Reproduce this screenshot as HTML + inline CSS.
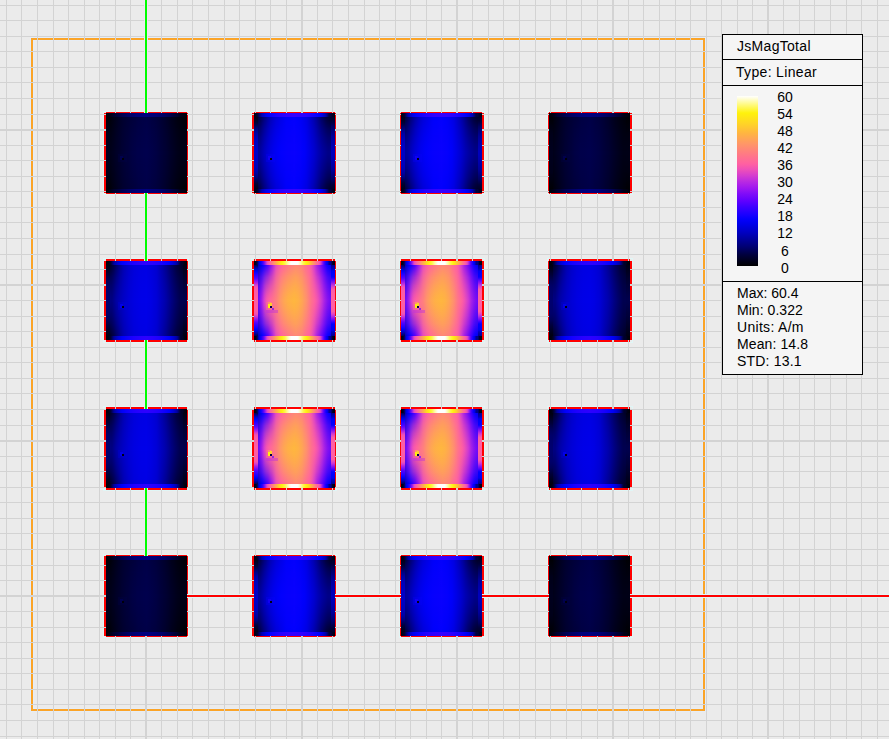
<!DOCTYPE html>
<html><head><meta charset="utf-8"><title>JsMagTotal</title>
<style>
html,body{margin:0;padding:0;background:#ebebeb;}
body{width:889px;height:739px;position:relative;overflow:hidden;font-family:"Liberation Sans",sans-serif;}
.t{position:absolute;font-size:14px;line-height:16px;color:#000;white-space:nowrap;}
.n{left:765px;width:40px;text-align:center;}
</style></head><body>
<svg width="889" height="739" viewBox="0 0 889 739" style="position:absolute;left:0;top:0"><defs><linearGradient id="fadeT" x1="0" x2="0" y1="0" y2="1"><stop offset="0" stop-color="#fff"/><stop offset="0.15" stop-color="#fff" stop-opacity="0.8"/><stop offset="0.35" stop-color="#fff" stop-opacity="0.52"/><stop offset="0.6" stop-color="#fff" stop-opacity="0.27"/><stop offset="0.85" stop-color="#fff" stop-opacity="0.08"/><stop offset="1" stop-color="#fff" stop-opacity="0"/></linearGradient><linearGradient id="fadeB" x1="0" x2="0" y1="1" y2="0"><stop offset="0" stop-color="#fff"/><stop offset="0.15" stop-color="#fff" stop-opacity="0.8"/><stop offset="0.35" stop-color="#fff" stop-opacity="0.52"/><stop offset="0.6" stop-color="#fff" stop-opacity="0.27"/><stop offset="0.85" stop-color="#fff" stop-opacity="0.08"/><stop offset="1" stop-color="#fff" stop-opacity="0"/></linearGradient><mask id="mT" maskContentUnits="objectBoundingBox"><rect x="0" y="0" width="1" height="1" fill="url(#fadeT)"/></mask><mask id="mB" maskContentUnits="objectBoundingBox"><rect x="0" y="0" width="1" height="1" fill="url(#fadeB)"/></mask><linearGradient id="g1" x1="0" x2="1" y1="0" y2="0"><stop offset="0.0000" stop-color="#000019"/><stop offset="0.0247" stop-color="#000019"/><stop offset="0.0494" stop-color="#000019"/><stop offset="0.0741" stop-color="#00001d"/><stop offset="0.0988" stop-color="#000021"/><stop offset="0.1235" stop-color="#000026"/><stop offset="0.1481" stop-color="#00002a"/><stop offset="0.1728" stop-color="#00002e"/><stop offset="0.1975" stop-color="#000033"/><stop offset="0.2222" stop-color="#000036"/><stop offset="0.2469" stop-color="#00003a"/><stop offset="0.2716" stop-color="#00003c"/><stop offset="0.2963" stop-color="#000040"/><stop offset="0.3210" stop-color="#000044"/><stop offset="0.3457" stop-color="#000046"/><stop offset="0.3704" stop-color="#000048"/><stop offset="0.3951" stop-color="#00004a"/><stop offset="0.4198" stop-color="#00004a"/><stop offset="0.4444" stop-color="#00004b"/><stop offset="0.4691" stop-color="#00004c"/><stop offset="0.4938" stop-color="#00004d"/><stop offset="0.5000" stop-color="#00004d"/><stop offset="0.5062" stop-color="#00004d"/><stop offset="0.5185" stop-color="#00004c"/><stop offset="0.5309" stop-color="#00004b"/><stop offset="0.5432" stop-color="#00004a"/><stop offset="0.5556" stop-color="#000049"/><stop offset="0.5679" stop-color="#000048"/><stop offset="0.5802" stop-color="#000047"/><stop offset="0.5926" stop-color="#000046"/><stop offset="0.6049" stop-color="#000045"/><stop offset="0.6173" stop-color="#000044"/><stop offset="0.6296" stop-color="#000042"/><stop offset="0.6420" stop-color="#000040"/><stop offset="0.6543" stop-color="#00003e"/><stop offset="0.6667" stop-color="#00003c"/><stop offset="0.6790" stop-color="#00003a"/><stop offset="0.6914" stop-color="#000039"/><stop offset="0.7037" stop-color="#000037"/><stop offset="0.7160" stop-color="#000035"/><stop offset="0.7284" stop-color="#000034"/><stop offset="0.7407" stop-color="#000032"/><stop offset="0.7531" stop-color="#000030"/><stop offset="0.7654" stop-color="#00002e"/><stop offset="0.7778" stop-color="#00002b"/><stop offset="0.7901" stop-color="#000029"/><stop offset="0.8025" stop-color="#000027"/><stop offset="0.8148" stop-color="#000025"/><stop offset="0.8272" stop-color="#000023"/><stop offset="0.8395" stop-color="#000021"/><stop offset="0.8519" stop-color="#00001f"/><stop offset="0.8642" stop-color="#00001d"/><stop offset="0.8765" stop-color="#00001b"/><stop offset="0.8889" stop-color="#000019"/><stop offset="0.9012" stop-color="#000018"/><stop offset="0.9136" stop-color="#000016"/><stop offset="0.9259" stop-color="#000016"/><stop offset="0.9383" stop-color="#000016"/><stop offset="0.9506" stop-color="#000016"/><stop offset="0.9630" stop-color="#000016"/><stop offset="0.9753" stop-color="#000016"/><stop offset="0.9877" stop-color="#000016"/><stop offset="1.0000" stop-color="#000016"/></linearGradient><linearGradient id="g2" x1="0" x2="1" y1="0" y2="0"><stop offset="0.0000" stop-color="#000005"/><stop offset="0.0247" stop-color="#000008"/><stop offset="0.0494" stop-color="#00000a"/><stop offset="0.0741" stop-color="#000010"/><stop offset="0.0988" stop-color="#000016"/><stop offset="0.1235" stop-color="#00001c"/><stop offset="0.1481" stop-color="#000022"/><stop offset="0.1728" stop-color="#000027"/><stop offset="0.1975" stop-color="#00002c"/><stop offset="0.2222" stop-color="#000030"/><stop offset="0.2469" stop-color="#000033"/><stop offset="0.2716" stop-color="#000035"/><stop offset="0.2963" stop-color="#000038"/><stop offset="0.3210" stop-color="#00003a"/><stop offset="0.3457" stop-color="#00003c"/><stop offset="0.3704" stop-color="#00003f"/><stop offset="0.3951" stop-color="#000042"/><stop offset="0.4198" stop-color="#000043"/><stop offset="0.4444" stop-color="#000045"/><stop offset="0.4691" stop-color="#000046"/><stop offset="0.4938" stop-color="#000047"/><stop offset="0.5000" stop-color="#000048"/><stop offset="0.5062" stop-color="#000047"/><stop offset="0.5185" stop-color="#000046"/><stop offset="0.5309" stop-color="#000045"/><stop offset="0.5432" stop-color="#000044"/><stop offset="0.5556" stop-color="#000042"/><stop offset="0.5679" stop-color="#000041"/><stop offset="0.5802" stop-color="#000040"/><stop offset="0.5926" stop-color="#00003f"/><stop offset="0.6049" stop-color="#00003e"/><stop offset="0.6173" stop-color="#00003d"/><stop offset="0.6296" stop-color="#00003b"/><stop offset="0.6420" stop-color="#000039"/><stop offset="0.6543" stop-color="#000038"/><stop offset="0.6667" stop-color="#000036"/><stop offset="0.6790" stop-color="#000034"/><stop offset="0.6914" stop-color="#000032"/><stop offset="0.7037" stop-color="#000030"/><stop offset="0.7160" stop-color="#00002e"/><stop offset="0.7284" stop-color="#00002c"/><stop offset="0.7407" stop-color="#00002a"/><stop offset="0.7531" stop-color="#000027"/><stop offset="0.7654" stop-color="#000025"/><stop offset="0.7778" stop-color="#000022"/><stop offset="0.7901" stop-color="#000020"/><stop offset="0.8025" stop-color="#00001d"/><stop offset="0.8148" stop-color="#00001b"/><stop offset="0.8272" stop-color="#000019"/><stop offset="0.8395" stop-color="#000017"/><stop offset="0.8519" stop-color="#000015"/><stop offset="0.8642" stop-color="#000013"/><stop offset="0.8765" stop-color="#000011"/><stop offset="0.8889" stop-color="#00000f"/><stop offset="0.9012" stop-color="#00000e"/><stop offset="0.9136" stop-color="#00000c"/><stop offset="0.9259" stop-color="#00000b"/><stop offset="0.9383" stop-color="#00000a"/><stop offset="0.9506" stop-color="#000009"/><stop offset="0.9630" stop-color="#000008"/><stop offset="0.9753" stop-color="#000007"/><stop offset="0.9877" stop-color="#000006"/><stop offset="1.0000" stop-color="#000005"/></linearGradient><linearGradient id="g3" x1="0" x2="1" y1="0" y2="0"><stop offset="0.0000" stop-color="#000003"/><stop offset="0.0247" stop-color="#00000c"/><stop offset="0.0494" stop-color="#000014"/><stop offset="0.0741" stop-color="#000020"/><stop offset="0.0988" stop-color="#00002d"/><stop offset="0.1235" stop-color="#000034"/><stop offset="0.1481" stop-color="#00003c"/><stop offset="0.1728" stop-color="#000046"/><stop offset="0.1975" stop-color="#00004f"/><stop offset="0.2222" stop-color="#000056"/><stop offset="0.2469" stop-color="#00005c"/><stop offset="0.2716" stop-color="#000063"/><stop offset="0.2963" stop-color="#000068"/><stop offset="0.3210" stop-color="#00006c"/><stop offset="0.3457" stop-color="#000071"/><stop offset="0.3704" stop-color="#000076"/><stop offset="0.3951" stop-color="#000078"/><stop offset="0.4198" stop-color="#00007a"/><stop offset="0.4444" stop-color="#00007c"/><stop offset="0.4691" stop-color="#00007d"/><stop offset="0.4938" stop-color="#00007f"/><stop offset="0.5000" stop-color="#000080"/><stop offset="0.5062" stop-color="#00007f"/><stop offset="0.5185" stop-color="#00007e"/><stop offset="0.5309" stop-color="#00007d"/><stop offset="0.5432" stop-color="#00007c"/><stop offset="0.5556" stop-color="#00007b"/><stop offset="0.5679" stop-color="#00007a"/><stop offset="0.5802" stop-color="#000079"/><stop offset="0.5926" stop-color="#000078"/><stop offset="0.6049" stop-color="#000077"/><stop offset="0.6173" stop-color="#000076"/><stop offset="0.6296" stop-color="#000075"/><stop offset="0.6420" stop-color="#000072"/><stop offset="0.6543" stop-color="#00006f"/><stop offset="0.6667" stop-color="#00006d"/><stop offset="0.6790" stop-color="#00006a"/><stop offset="0.6914" stop-color="#000068"/><stop offset="0.7037" stop-color="#000065"/><stop offset="0.7160" stop-color="#000063"/><stop offset="0.7284" stop-color="#00005f"/><stop offset="0.7407" stop-color="#00005c"/><stop offset="0.7531" stop-color="#000058"/><stop offset="0.7654" stop-color="#000055"/><stop offset="0.7778" stop-color="#000052"/><stop offset="0.7901" stop-color="#00004e"/><stop offset="0.8025" stop-color="#000048"/><stop offset="0.8148" stop-color="#000043"/><stop offset="0.8272" stop-color="#00003e"/><stop offset="0.8395" stop-color="#00003a"/><stop offset="0.8519" stop-color="#000036"/><stop offset="0.8642" stop-color="#000032"/><stop offset="0.8765" stop-color="#00002e"/><stop offset="0.8889" stop-color="#000028"/><stop offset="0.9012" stop-color="#000021"/><stop offset="0.9136" stop-color="#00001b"/><stop offset="0.9259" stop-color="#000014"/><stop offset="0.9383" stop-color="#000014"/><stop offset="0.9506" stop-color="#000014"/><stop offset="0.9630" stop-color="#000010"/><stop offset="0.9753" stop-color="#00000c"/><stop offset="0.9877" stop-color="#000007"/><stop offset="1.0000" stop-color="#000003"/></linearGradient><linearGradient id="g4" x1="0" x2="0" y1="0" y2="1"><stop offset="0.0000" stop-color="#000005"/><stop offset="0.0282" stop-color="#000008"/><stop offset="0.0563" stop-color="#00000a"/><stop offset="0.0845" stop-color="#00000c"/><stop offset="0.1127" stop-color="#00000f"/><stop offset="0.1408" stop-color="#000012"/><stop offset="0.1690" stop-color="#000014"/><stop offset="0.1972" stop-color="#000016"/><stop offset="0.2254" stop-color="#000019"/><stop offset="0.2535" stop-color="#00001a"/><stop offset="0.2817" stop-color="#00001a"/><stop offset="0.3099" stop-color="#00001a"/><stop offset="0.3380" stop-color="#00001b"/><stop offset="0.3662" stop-color="#00001c"/><stop offset="0.3944" stop-color="#00001c"/><stop offset="0.4225" stop-color="#00001d"/><stop offset="0.4507" stop-color="#00001d"/><stop offset="0.4789" stop-color="#00001e"/><stop offset="0.5211" stop-color="#00001e"/><stop offset="0.5493" stop-color="#00001d"/><stop offset="0.5775" stop-color="#00001d"/><stop offset="0.6056" stop-color="#00001c"/><stop offset="0.6338" stop-color="#00001c"/><stop offset="0.6620" stop-color="#00001b"/><stop offset="0.6901" stop-color="#00001a"/><stop offset="0.7183" stop-color="#00001a"/><stop offset="0.7465" stop-color="#00001a"/><stop offset="0.7746" stop-color="#000019"/><stop offset="0.8028" stop-color="#000016"/><stop offset="0.8310" stop-color="#000014"/><stop offset="0.8592" stop-color="#000012"/><stop offset="0.8873" stop-color="#00000f"/><stop offset="0.9155" stop-color="#00000c"/><stop offset="0.9437" stop-color="#00000a"/><stop offset="0.9718" stop-color="#000008"/><stop offset="1.0000" stop-color="#000005"/></linearGradient><linearGradient id="g5" x1="0" x2="0" y1="0" y2="1"><stop offset="0.0000" stop-color="#000005"/><stop offset="0.0282" stop-color="#000006"/><stop offset="0.0563" stop-color="#000008"/><stop offset="0.0845" stop-color="#000009"/><stop offset="0.1127" stop-color="#00000b"/><stop offset="0.1408" stop-color="#00000c"/><stop offset="0.1690" stop-color="#00000d"/><stop offset="0.1972" stop-color="#00000e"/><stop offset="0.2254" stop-color="#000010"/><stop offset="0.2535" stop-color="#000011"/><stop offset="0.2817" stop-color="#000012"/><stop offset="0.3099" stop-color="#000012"/><stop offset="0.3380" stop-color="#000013"/><stop offset="0.3662" stop-color="#000014"/><stop offset="0.3944" stop-color="#000014"/><stop offset="0.4225" stop-color="#000015"/><stop offset="0.4507" stop-color="#000015"/><stop offset="0.4789" stop-color="#000016"/><stop offset="0.5211" stop-color="#000016"/><stop offset="0.5493" stop-color="#000015"/><stop offset="0.5775" stop-color="#000015"/><stop offset="0.6056" stop-color="#000014"/><stop offset="0.6338" stop-color="#000014"/><stop offset="0.6620" stop-color="#000013"/><stop offset="0.6901" stop-color="#000012"/><stop offset="0.7183" stop-color="#000012"/><stop offset="0.7465" stop-color="#000011"/><stop offset="0.7746" stop-color="#000010"/><stop offset="0.8028" stop-color="#00000e"/><stop offset="0.8310" stop-color="#00000d"/><stop offset="0.8592" stop-color="#00000c"/><stop offset="0.8873" stop-color="#00000b"/><stop offset="0.9155" stop-color="#000009"/><stop offset="0.9437" stop-color="#000008"/><stop offset="0.9718" stop-color="#000006"/><stop offset="1.0000" stop-color="#000005"/></linearGradient><linearGradient id="g6" x1="0" x2="1" y1="0" y2="0"><stop offset="0.0000" stop-color="#00009d"/><stop offset="0.0247" stop-color="#00009d"/><stop offset="0.0494" stop-color="#00009d"/><stop offset="0.0741" stop-color="#00009d"/><stop offset="0.0988" stop-color="#0000ac"/><stop offset="0.1235" stop-color="#0000bc"/><stop offset="0.1481" stop-color="#0000ca"/><stop offset="0.1728" stop-color="#0000d6"/><stop offset="0.1975" stop-color="#0000df"/><stop offset="0.2099" stop-color="#0000e4"/><stop offset="0.2222" stop-color="#0000e8"/><stop offset="0.2469" stop-color="#0000ef"/><stop offset="0.2716" stop-color="#0000f4"/><stop offset="0.2963" stop-color="#0000f9"/><stop offset="0.3210" stop-color="#0100fc"/><stop offset="0.3457" stop-color="#0300fd"/><stop offset="0.3704" stop-color="#0400fd"/><stop offset="0.3951" stop-color="#0600fd"/><stop offset="0.4074" stop-color="#0600fd"/><stop offset="0.4198" stop-color="#0700fd"/><stop offset="0.4444" stop-color="#0700fd"/><stop offset="0.4691" stop-color="#0800fd"/><stop offset="0.4938" stop-color="#0800fe"/><stop offset="0.5000" stop-color="#0900fe"/><stop offset="0.5062" stop-color="#0800fe"/><stop offset="0.5185" stop-color="#0800fd"/><stop offset="0.5309" stop-color="#0700fd"/><stop offset="0.5432" stop-color="#0600fd"/><stop offset="0.5556" stop-color="#0600fd"/><stop offset="0.5679" stop-color="#0500fd"/><stop offset="0.5802" stop-color="#0400fd"/><stop offset="0.5926" stop-color="#0200fc"/><stop offset="0.6049" stop-color="#0100fc"/><stop offset="0.6173" stop-color="#0000fb"/><stop offset="0.6296" stop-color="#0000f9"/><stop offset="0.6420" stop-color="#0000f5"/><stop offset="0.6543" stop-color="#0000f0"/><stop offset="0.6667" stop-color="#0000ec"/><stop offset="0.6790" stop-color="#0000e8"/><stop offset="0.6914" stop-color="#0000e3"/><stop offset="0.7037" stop-color="#0000de"/><stop offset="0.7160" stop-color="#0000d9"/><stop offset="0.7284" stop-color="#0000d5"/><stop offset="0.7407" stop-color="#0000d0"/><stop offset="0.7531" stop-color="#0000ca"/><stop offset="0.7654" stop-color="#0000c3"/><stop offset="0.7778" stop-color="#0000bd"/><stop offset="0.7901" stop-color="#0000b6"/><stop offset="0.8025" stop-color="#0000b0"/><stop offset="0.8148" stop-color="#0000ab"/><stop offset="0.8272" stop-color="#0000a5"/><stop offset="0.8395" stop-color="#0000a0"/><stop offset="0.8519" stop-color="#00009b"/><stop offset="0.8642" stop-color="#000097"/><stop offset="0.8765" stop-color="#000093"/><stop offset="0.8889" stop-color="#00008f"/><stop offset="0.9012" stop-color="#00008b"/><stop offset="0.9136" stop-color="#000087"/><stop offset="0.9259" stop-color="#000087"/><stop offset="0.9383" stop-color="#000087"/><stop offset="0.9506" stop-color="#000087"/><stop offset="0.9630" stop-color="#000087"/><stop offset="0.9753" stop-color="#000087"/><stop offset="0.9877" stop-color="#000087"/><stop offset="1.0000" stop-color="#000087"/></linearGradient><linearGradient id="g7" x1="0" x2="1" y1="0" y2="0"><stop offset="0.0000" stop-color="#00001e"/><stop offset="0.0247" stop-color="#000020"/><stop offset="0.0494" stop-color="#000031"/><stop offset="0.0741" stop-color="#000048"/><stop offset="0.0988" stop-color="#000060"/><stop offset="0.1235" stop-color="#000078"/><stop offset="0.1481" stop-color="#00008c"/><stop offset="0.1728" stop-color="#0000a1"/><stop offset="0.1975" stop-color="#0000b2"/><stop offset="0.2222" stop-color="#0000c0"/><stop offset="0.2469" stop-color="#0000cc"/><stop offset="0.2716" stop-color="#0000d8"/><stop offset="0.2963" stop-color="#0000de"/><stop offset="0.3210" stop-color="#0000e5"/><stop offset="0.3333" stop-color="#0000e8"/><stop offset="0.3457" stop-color="#0000eb"/><stop offset="0.3704" stop-color="#0000f2"/><stop offset="0.3951" stop-color="#0000f9"/><stop offset="0.4198" stop-color="#0000fb"/><stop offset="0.4444" stop-color="#0000fc"/><stop offset="0.4691" stop-color="#0200fc"/><stop offset="0.4938" stop-color="#0300fd"/><stop offset="0.5000" stop-color="#0300fd"/><stop offset="0.5062" stop-color="#0300fc"/><stop offset="0.5185" stop-color="#0100fc"/><stop offset="0.5309" stop-color="#0000fc"/><stop offset="0.5432" stop-color="#0000fb"/><stop offset="0.5556" stop-color="#0000f9"/><stop offset="0.5679" stop-color="#0000f7"/><stop offset="0.5802" stop-color="#0000f6"/><stop offset="0.5926" stop-color="#0000f2"/><stop offset="0.6049" stop-color="#0000ef"/><stop offset="0.6173" stop-color="#0000eb"/><stop offset="0.6296" stop-color="#0000e8"/><stop offset="0.6420" stop-color="#0000e4"/><stop offset="0.6543" stop-color="#0000e1"/><stop offset="0.6667" stop-color="#0000d9"/><stop offset="0.6790" stop-color="#0000d2"/><stop offset="0.6914" stop-color="#0000cb"/><stop offset="0.7037" stop-color="#0000c4"/><stop offset="0.7160" stop-color="#0000bd"/><stop offset="0.7284" stop-color="#0000b6"/><stop offset="0.7407" stop-color="#0000ae"/><stop offset="0.7531" stop-color="#0000a5"/><stop offset="0.7654" stop-color="#00009c"/><stop offset="0.7778" stop-color="#000092"/><stop offset="0.7901" stop-color="#000087"/><stop offset="0.8025" stop-color="#00007d"/><stop offset="0.8148" stop-color="#000073"/><stop offset="0.8272" stop-color="#000068"/><stop offset="0.8395" stop-color="#000060"/><stop offset="0.8519" stop-color="#000058"/><stop offset="0.8642" stop-color="#00004f"/><stop offset="0.8765" stop-color="#000047"/><stop offset="0.8889" stop-color="#00003e"/><stop offset="0.9012" stop-color="#000038"/><stop offset="0.9136" stop-color="#000034"/><stop offset="0.9259" stop-color="#00002f"/><stop offset="0.9383" stop-color="#00002a"/><stop offset="0.9506" stop-color="#000027"/><stop offset="0.9630" stop-color="#000025"/><stop offset="0.9753" stop-color="#000024"/><stop offset="0.9877" stop-color="#000022"/><stop offset="1.0000" stop-color="#000020"/></linearGradient><linearGradient id="g8" x1="0" x2="1" y1="0" y2="0"><stop offset="0.0000" stop-color="#00000f"/><stop offset="0.0247" stop-color="#000020"/><stop offset="0.0370" stop-color="#000028"/><stop offset="0.0494" stop-color="#00003c"/><stop offset="0.0617" stop-color="#000063"/><stop offset="0.0741" stop-color="#000080"/><stop offset="0.0988" stop-color="#0000b7"/><stop offset="0.1235" stop-color="#0000d1"/><stop offset="0.1481" stop-color="#0000ec"/><stop offset="0.1728" stop-color="#0000f9"/><stop offset="0.1975" stop-color="#0600fd"/><stop offset="0.2222" stop-color="#0d00fe"/><stop offset="0.2469" stop-color="#1300ff"/><stop offset="0.2716" stop-color="#1900ff"/><stop offset="0.2963" stop-color="#1f00ff"/><stop offset="0.3210" stop-color="#2400ff"/><stop offset="0.3457" stop-color="#2800ff"/><stop offset="0.3704" stop-color="#2b00ff"/><stop offset="0.3951" stop-color="#2e00ff"/><stop offset="0.4198" stop-color="#3100ff"/><stop offset="0.4444" stop-color="#3200ff"/><stop offset="0.4691" stop-color="#3300ff"/><stop offset="0.4938" stop-color="#3400ff"/><stop offset="0.5000" stop-color="#3400ff"/><stop offset="0.5062" stop-color="#3400ff"/><stop offset="0.5185" stop-color="#3300ff"/><stop offset="0.5309" stop-color="#3300ff"/><stop offset="0.5432" stop-color="#3200ff"/><stop offset="0.5556" stop-color="#3200ff"/><stop offset="0.5679" stop-color="#3100ff"/><stop offset="0.5802" stop-color="#3000ff"/><stop offset="0.5926" stop-color="#2f00ff"/><stop offset="0.6049" stop-color="#2d00ff"/><stop offset="0.6173" stop-color="#2c00ff"/><stop offset="0.6296" stop-color="#2a00ff"/><stop offset="0.6420" stop-color="#2900ff"/><stop offset="0.6543" stop-color="#2700ff"/><stop offset="0.6667" stop-color="#2400ff"/><stop offset="0.6790" stop-color="#2200ff"/><stop offset="0.6914" stop-color="#1f00ff"/><stop offset="0.7037" stop-color="#1c00ff"/><stop offset="0.7160" stop-color="#1900ff"/><stop offset="0.7284" stop-color="#1600ff"/><stop offset="0.7407" stop-color="#1300ff"/><stop offset="0.7531" stop-color="#0f00ff"/><stop offset="0.7654" stop-color="#0c00fe"/><stop offset="0.7778" stop-color="#0900fe"/><stop offset="0.7901" stop-color="#0500fd"/><stop offset="0.8025" stop-color="#0000fc"/><stop offset="0.8148" stop-color="#0000f6"/><stop offset="0.8272" stop-color="#0000ef"/><stop offset="0.8395" stop-color="#0000e4"/><stop offset="0.8519" stop-color="#0000d5"/><stop offset="0.8642" stop-color="#0000c8"/><stop offset="0.8765" stop-color="#0000ba"/><stop offset="0.8889" stop-color="#0000a2"/><stop offset="0.9012" stop-color="#000083"/><stop offset="0.9136" stop-color="#000064"/><stop offset="0.9259" stop-color="#00003c"/><stop offset="0.9383" stop-color="#00003c"/><stop offset="0.9506" stop-color="#00003c"/><stop offset="0.9630" stop-color="#000028"/><stop offset="0.9753" stop-color="#000020"/><stop offset="0.9877" stop-color="#000017"/><stop offset="1.0000" stop-color="#00000f"/></linearGradient><linearGradient id="g9" x1="0" x2="0" y1="0" y2="1"><stop offset="0.0000" stop-color="#000019"/><stop offset="0.0282" stop-color="#000023"/><stop offset="0.0563" stop-color="#00002d"/><stop offset="0.0845" stop-color="#00003a"/><stop offset="0.1127" stop-color="#00004f"/><stop offset="0.1408" stop-color="#000068"/><stop offset="0.1690" stop-color="#000080"/><stop offset="0.1972" stop-color="#000090"/><stop offset="0.2254" stop-color="#0000a1"/><stop offset="0.2535" stop-color="#0000aa"/><stop offset="0.2817" stop-color="#0000b2"/><stop offset="0.3099" stop-color="#0000b9"/><stop offset="0.3380" stop-color="#0000bb"/><stop offset="0.3662" stop-color="#0000be"/><stop offset="0.3944" stop-color="#0000c0"/><stop offset="0.4225" stop-color="#0000c3"/><stop offset="0.4507" stop-color="#0000c4"/><stop offset="0.4789" stop-color="#0000c5"/><stop offset="0.5211" stop-color="#0000c5"/><stop offset="0.5493" stop-color="#0000c4"/><stop offset="0.5775" stop-color="#0000c3"/><stop offset="0.6056" stop-color="#0000c0"/><stop offset="0.6338" stop-color="#0000be"/><stop offset="0.6620" stop-color="#0000bb"/><stop offset="0.6901" stop-color="#0000b9"/><stop offset="0.7183" stop-color="#0000b2"/><stop offset="0.7465" stop-color="#0000aa"/><stop offset="0.7746" stop-color="#0000a1"/><stop offset="0.8028" stop-color="#000090"/><stop offset="0.8310" stop-color="#000080"/><stop offset="0.8592" stop-color="#000068"/><stop offset="0.8873" stop-color="#00004f"/><stop offset="0.9155" stop-color="#00003a"/><stop offset="0.9437" stop-color="#00002d"/><stop offset="0.9718" stop-color="#000023"/><stop offset="1.0000" stop-color="#000019"/></linearGradient><linearGradient id="g10" x1="0" x2="0" y1="0" y2="1"><stop offset="0.0000" stop-color="#000028"/><stop offset="0.0282" stop-color="#000031"/><stop offset="0.0563" stop-color="#000039"/><stop offset="0.0845" stop-color="#000048"/><stop offset="0.1127" stop-color="#000058"/><stop offset="0.1268" stop-color="#000061"/><stop offset="0.1408" stop-color="#000066"/><stop offset="0.1690" stop-color="#000072"/><stop offset="0.1972" stop-color="#00007d"/><stop offset="0.2254" stop-color="#000088"/><stop offset="0.2535" stop-color="#000093"/><stop offset="0.2676" stop-color="#000099"/><stop offset="0.2817" stop-color="#00009b"/><stop offset="0.3099" stop-color="#0000a1"/><stop offset="0.3380" stop-color="#0000a6"/><stop offset="0.3662" stop-color="#0000ab"/><stop offset="0.3944" stop-color="#0000b0"/><stop offset="0.4225" stop-color="#0000b4"/><stop offset="0.4507" stop-color="#0000b8"/><stop offset="0.4789" stop-color="#0000bc"/><stop offset="0.5211" stop-color="#0000bc"/><stop offset="0.5493" stop-color="#0000b8"/><stop offset="0.5775" stop-color="#0000b4"/><stop offset="0.6056" stop-color="#0000b0"/><stop offset="0.6338" stop-color="#0000ab"/><stop offset="0.6620" stop-color="#0000a6"/><stop offset="0.6901" stop-color="#0000a1"/><stop offset="0.7183" stop-color="#00009b"/><stop offset="0.7324" stop-color="#000099"/><stop offset="0.7465" stop-color="#000093"/><stop offset="0.7746" stop-color="#000088"/><stop offset="0.8028" stop-color="#00007d"/><stop offset="0.8310" stop-color="#000072"/><stop offset="0.8592" stop-color="#000066"/><stop offset="0.8732" stop-color="#000061"/><stop offset="0.8873" stop-color="#000058"/><stop offset="0.9155" stop-color="#000048"/><stop offset="0.9437" stop-color="#000039"/><stop offset="0.9718" stop-color="#000031"/><stop offset="1.0000" stop-color="#000028"/></linearGradient><linearGradient id="g11" x1="0" x2="1" y1="0" y2="0"><stop offset="0.0000" stop-color="#000080"/><stop offset="0.0247" stop-color="#000080"/><stop offset="0.0494" stop-color="#000080"/><stop offset="0.0741" stop-color="#000080"/><stop offset="0.0988" stop-color="#000090"/><stop offset="0.1235" stop-color="#0000a1"/><stop offset="0.1481" stop-color="#0000ad"/><stop offset="0.1728" stop-color="#0000b7"/><stop offset="0.1975" stop-color="#0000bf"/><stop offset="0.2222" stop-color="#0000c7"/><stop offset="0.2469" stop-color="#0000ce"/><stop offset="0.2716" stop-color="#0000d4"/><stop offset="0.2840" stop-color="#0000d8"/><stop offset="0.2963" stop-color="#0000d9"/><stop offset="0.3210" stop-color="#0000dd"/><stop offset="0.3457" stop-color="#0000e1"/><stop offset="0.3704" stop-color="#0000e3"/><stop offset="0.3951" stop-color="#0000e5"/><stop offset="0.4198" stop-color="#0000e7"/><stop offset="0.4444" stop-color="#0000e8"/><stop offset="0.4691" stop-color="#0000e8"/><stop offset="0.4938" stop-color="#0000e9"/><stop offset="0.5000" stop-color="#0000e9"/><stop offset="0.5062" stop-color="#0000e8"/><stop offset="0.5185" stop-color="#0000e7"/><stop offset="0.5309" stop-color="#0000e6"/><stop offset="0.5432" stop-color="#0000e5"/><stop offset="0.5556" stop-color="#0000e4"/><stop offset="0.5679" stop-color="#0000e2"/><stop offset="0.5802" stop-color="#0000df"/><stop offset="0.5926" stop-color="#0000dd"/><stop offset="0.6049" stop-color="#0000db"/><stop offset="0.6173" stop-color="#0000d9"/><stop offset="0.6296" stop-color="#0000d5"/><stop offset="0.6420" stop-color="#0000d0"/><stop offset="0.6543" stop-color="#0000cb"/><stop offset="0.6667" stop-color="#0000c6"/><stop offset="0.6790" stop-color="#0000c1"/><stop offset="0.6914" stop-color="#0000bc"/><stop offset="0.7037" stop-color="#0000b8"/><stop offset="0.7160" stop-color="#0000b3"/><stop offset="0.7284" stop-color="#0000ae"/><stop offset="0.7407" stop-color="#0000a8"/><stop offset="0.7531" stop-color="#0000a1"/><stop offset="0.7654" stop-color="#00009a"/><stop offset="0.7778" stop-color="#000093"/><stop offset="0.7901" stop-color="#00008c"/><stop offset="0.8025" stop-color="#000085"/><stop offset="0.8148" stop-color="#00007e"/><stop offset="0.8272" stop-color="#000078"/><stop offset="0.8395" stop-color="#000071"/><stop offset="0.8519" stop-color="#00006b"/><stop offset="0.8642" stop-color="#000065"/><stop offset="0.8765" stop-color="#000060"/><stop offset="0.8889" stop-color="#00005a"/><stop offset="0.9012" stop-color="#000055"/><stop offset="0.9136" stop-color="#00004f"/><stop offset="0.9259" stop-color="#00004f"/><stop offset="0.9383" stop-color="#00004f"/><stop offset="0.9506" stop-color="#00004f"/><stop offset="0.9630" stop-color="#00004f"/><stop offset="0.9753" stop-color="#00004f"/><stop offset="0.9877" stop-color="#00004f"/><stop offset="1.0000" stop-color="#00004f"/></linearGradient><linearGradient id="g12" x1="0" x2="1" y1="0" y2="0"><stop offset="0.0000" stop-color="#000014"/><stop offset="0.0247" stop-color="#00001c"/><stop offset="0.0494" stop-color="#000023"/><stop offset="0.0741" stop-color="#000037"/><stop offset="0.0988" stop-color="#00004a"/><stop offset="0.1235" stop-color="#000063"/><stop offset="0.1481" stop-color="#000079"/><stop offset="0.1728" stop-color="#00008f"/><stop offset="0.1975" stop-color="#0000a2"/><stop offset="0.2222" stop-color="#0000b3"/><stop offset="0.2469" stop-color="#0000bc"/><stop offset="0.2716" stop-color="#0000c6"/><stop offset="0.2840" stop-color="#0000ca"/><stop offset="0.2963" stop-color="#0000cd"/><stop offset="0.3210" stop-color="#0000d3"/><stop offset="0.3457" stop-color="#0000d9"/><stop offset="0.3704" stop-color="#0000dc"/><stop offset="0.3951" stop-color="#0000de"/><stop offset="0.4198" stop-color="#0000e1"/><stop offset="0.4444" stop-color="#0000e2"/><stop offset="0.4691" stop-color="#0000e3"/><stop offset="0.4938" stop-color="#0000e4"/><stop offset="0.5000" stop-color="#0000e4"/><stop offset="0.5062" stop-color="#0000e2"/><stop offset="0.5185" stop-color="#0000e0"/><stop offset="0.5309" stop-color="#0000df"/><stop offset="0.5432" stop-color="#0000dd"/><stop offset="0.5556" stop-color="#0000dc"/><stop offset="0.5679" stop-color="#0000da"/><stop offset="0.5802" stop-color="#0000d8"/><stop offset="0.5926" stop-color="#0000d6"/><stop offset="0.6049" stop-color="#0000d3"/><stop offset="0.6173" stop-color="#0000d1"/><stop offset="0.6296" stop-color="#0000cd"/><stop offset="0.6420" stop-color="#0000c6"/><stop offset="0.6543" stop-color="#0000bf"/><stop offset="0.6667" stop-color="#0000b8"/><stop offset="0.6790" stop-color="#0000b1"/><stop offset="0.6914" stop-color="#0000ab"/><stop offset="0.7037" stop-color="#0000a4"/><stop offset="0.7160" stop-color="#00009d"/><stop offset="0.7284" stop-color="#000096"/><stop offset="0.7407" stop-color="#00008f"/><stop offset="0.7531" stop-color="#000087"/><stop offset="0.7654" stop-color="#00007e"/><stop offset="0.7778" stop-color="#000076"/><stop offset="0.7901" stop-color="#00006e"/><stop offset="0.8025" stop-color="#000066"/><stop offset="0.8148" stop-color="#00005f"/><stop offset="0.8272" stop-color="#000058"/><stop offset="0.8395" stop-color="#000051"/><stop offset="0.8519" stop-color="#00004a"/><stop offset="0.8642" stop-color="#000043"/><stop offset="0.8765" stop-color="#00003c"/><stop offset="0.8889" stop-color="#000038"/><stop offset="0.9012" stop-color="#000034"/><stop offset="0.9136" stop-color="#000030"/><stop offset="0.9259" stop-color="#00002c"/><stop offset="0.9383" stop-color="#000027"/><stop offset="0.9506" stop-color="#000022"/><stop offset="0.9630" stop-color="#00001d"/><stop offset="0.9753" stop-color="#000018"/><stop offset="0.9877" stop-color="#000016"/><stop offset="1.0000" stop-color="#000014"/></linearGradient><linearGradient id="g13" x1="0" x2="1" y1="0" y2="0"><stop offset="0.0000" stop-color="#000005"/><stop offset="0.0247" stop-color="#00000f"/><stop offset="0.0370" stop-color="#000014"/><stop offset="0.0494" stop-color="#000028"/><stop offset="0.0617" stop-color="#00003c"/><stop offset="0.0741" stop-color="#00005c"/><stop offset="0.0988" stop-color="#00009d"/><stop offset="0.1235" stop-color="#0000bb"/><stop offset="0.1481" stop-color="#0000d5"/><stop offset="0.1728" stop-color="#0000e6"/><stop offset="0.1975" stop-color="#0000f9"/><stop offset="0.2222" stop-color="#0400fd"/><stop offset="0.2469" stop-color="#0b00fe"/><stop offset="0.2716" stop-color="#1000ff"/><stop offset="0.2963" stop-color="#1600ff"/><stop offset="0.3210" stop-color="#1a00ff"/><stop offset="0.3457" stop-color="#1f00ff"/><stop offset="0.3704" stop-color="#2200ff"/><stop offset="0.3951" stop-color="#2500ff"/><stop offset="0.4198" stop-color="#2800ff"/><stop offset="0.4444" stop-color="#2a00ff"/><stop offset="0.4691" stop-color="#2b00ff"/><stop offset="0.4938" stop-color="#2d00ff"/><stop offset="0.5000" stop-color="#2d00ff"/><stop offset="0.5062" stop-color="#2d00ff"/><stop offset="0.5185" stop-color="#2c00ff"/><stop offset="0.5309" stop-color="#2b00ff"/><stop offset="0.5432" stop-color="#2a00ff"/><stop offset="0.5556" stop-color="#2a00ff"/><stop offset="0.5679" stop-color="#2900ff"/><stop offset="0.5802" stop-color="#2800ff"/><stop offset="0.5926" stop-color="#2600ff"/><stop offset="0.6049" stop-color="#2500ff"/><stop offset="0.6173" stop-color="#2300ff"/><stop offset="0.6296" stop-color="#2100ff"/><stop offset="0.6420" stop-color="#2000ff"/><stop offset="0.6543" stop-color="#1d00ff"/><stop offset="0.6667" stop-color="#1b00ff"/><stop offset="0.6790" stop-color="#1900ff"/><stop offset="0.6914" stop-color="#1600ff"/><stop offset="0.7037" stop-color="#1300ff"/><stop offset="0.7160" stop-color="#1000ff"/><stop offset="0.7284" stop-color="#0d00fe"/><stop offset="0.7407" stop-color="#0a00fe"/><stop offset="0.7531" stop-color="#0700fd"/><stop offset="0.7654" stop-color="#0300fd"/><stop offset="0.7778" stop-color="#0000fc"/><stop offset="0.7901" stop-color="#0000f5"/><stop offset="0.8025" stop-color="#0000ec"/><stop offset="0.8148" stop-color="#0000e2"/><stop offset="0.8272" stop-color="#0000d9"/><stop offset="0.8395" stop-color="#0000cd"/><stop offset="0.8519" stop-color="#0000bf"/><stop offset="0.8642" stop-color="#0000b2"/><stop offset="0.8765" stop-color="#0000a1"/><stop offset="0.8889" stop-color="#000082"/><stop offset="0.9012" stop-color="#000060"/><stop offset="0.9136" stop-color="#00003e"/><stop offset="0.9259" stop-color="#000028"/><stop offset="0.9383" stop-color="#000028"/><stop offset="0.9506" stop-color="#000028"/><stop offset="0.9630" stop-color="#000014"/><stop offset="0.9753" stop-color="#00000f"/><stop offset="0.9877" stop-color="#00000a"/><stop offset="1.0000" stop-color="#000005"/></linearGradient><linearGradient id="g14" x1="0" x2="0" y1="0" y2="1"><stop offset="0.0000" stop-color="#00000f"/><stop offset="0.0282" stop-color="#000016"/><stop offset="0.0563" stop-color="#00001e"/><stop offset="0.0845" stop-color="#000027"/><stop offset="0.1127" stop-color="#000030"/><stop offset="0.1408" stop-color="#000037"/><stop offset="0.1690" stop-color="#000042"/><stop offset="0.1972" stop-color="#00004c"/><stop offset="0.2254" stop-color="#000057"/><stop offset="0.2535" stop-color="#00005d"/><stop offset="0.2817" stop-color="#000063"/><stop offset="0.3099" stop-color="#000068"/><stop offset="0.3380" stop-color="#00006a"/><stop offset="0.3662" stop-color="#00006b"/><stop offset="0.3944" stop-color="#00006c"/><stop offset="0.4225" stop-color="#00006d"/><stop offset="0.4507" stop-color="#00006e"/><stop offset="0.4789" stop-color="#00006f"/><stop offset="0.5211" stop-color="#00006f"/><stop offset="0.5493" stop-color="#00006e"/><stop offset="0.5775" stop-color="#00006d"/><stop offset="0.6056" stop-color="#00006c"/><stop offset="0.6338" stop-color="#00006b"/><stop offset="0.6620" stop-color="#00006a"/><stop offset="0.6901" stop-color="#000068"/><stop offset="0.7183" stop-color="#000063"/><stop offset="0.7465" stop-color="#00005d"/><stop offset="0.7746" stop-color="#000057"/><stop offset="0.8028" stop-color="#00004c"/><stop offset="0.8310" stop-color="#000042"/><stop offset="0.8592" stop-color="#000037"/><stop offset="0.8873" stop-color="#000030"/><stop offset="0.9155" stop-color="#000027"/><stop offset="0.9437" stop-color="#00001e"/><stop offset="0.9718" stop-color="#000016"/><stop offset="1.0000" stop-color="#00000f"/></linearGradient><linearGradient id="g15" x1="0" x2="0" y1="0" y2="1"><stop offset="0.0000" stop-color="#000014"/><stop offset="0.0282" stop-color="#000018"/><stop offset="0.0563" stop-color="#00001c"/><stop offset="0.0845" stop-color="#000020"/><stop offset="0.1127" stop-color="#000024"/><stop offset="0.1408" stop-color="#000028"/><stop offset="0.1690" stop-color="#00002c"/><stop offset="0.1972" stop-color="#00002f"/><stop offset="0.2254" stop-color="#000033"/><stop offset="0.2535" stop-color="#000036"/><stop offset="0.2817" stop-color="#00003a"/><stop offset="0.3099" stop-color="#00003c"/><stop offset="0.3380" stop-color="#00003e"/><stop offset="0.3662" stop-color="#000041"/><stop offset="0.3944" stop-color="#000044"/><stop offset="0.4225" stop-color="#000047"/><stop offset="0.4507" stop-color="#00004a"/><stop offset="0.4789" stop-color="#00004c"/><stop offset="0.5211" stop-color="#00004c"/><stop offset="0.5493" stop-color="#00004a"/><stop offset="0.5775" stop-color="#000047"/><stop offset="0.6056" stop-color="#000044"/><stop offset="0.6338" stop-color="#000041"/><stop offset="0.6620" stop-color="#00003e"/><stop offset="0.6901" stop-color="#00003c"/><stop offset="0.7183" stop-color="#00003a"/><stop offset="0.7465" stop-color="#000036"/><stop offset="0.7746" stop-color="#000033"/><stop offset="0.8028" stop-color="#00002f"/><stop offset="0.8310" stop-color="#00002c"/><stop offset="0.8592" stop-color="#000028"/><stop offset="0.8873" stop-color="#000024"/><stop offset="0.9155" stop-color="#000020"/><stop offset="0.9437" stop-color="#00001c"/><stop offset="0.9718" stop-color="#000018"/><stop offset="1.0000" stop-color="#000014"/></linearGradient><linearGradient id="g16" x1="0" x2="1" y1="0" y2="0"><stop offset="0.0000" stop-color="#700bf6"/><stop offset="0.0247" stop-color="#700bf6"/><stop offset="0.0494" stop-color="#700bf6"/><stop offset="0.0617" stop-color="#700bf6"/><stop offset="0.0741" stop-color="#8412f1"/><stop offset="0.0864" stop-color="#961aeb"/><stop offset="0.0988" stop-color="#a822e5"/><stop offset="0.1111" stop-color="#be30db"/><stop offset="0.1235" stop-color="#d13dd1"/><stop offset="0.1358" stop-color="#e148c2"/><stop offset="0.1481" stop-color="#ed51b7"/><stop offset="0.1605" stop-color="#f658ad"/><stop offset="0.1728" stop-color="#fa5ca8"/><stop offset="0.1852" stop-color="#ff60a2"/><stop offset="0.1975" stop-color="#ff659d"/><stop offset="0.2222" stop-color="#ff6d93"/><stop offset="0.2469" stop-color="#ff7689"/><stop offset="0.2716" stop-color="#ff7e80"/><stop offset="0.2963" stop-color="#ff8a74"/><stop offset="0.3210" stop-color="#ff9668"/><stop offset="0.3457" stop-color="#ff9e5e"/><stop offset="0.3704" stop-color="#ffa654"/><stop offset="0.3951" stop-color="#ffab4e"/><stop offset="0.4198" stop-color="#ffb047"/><stop offset="0.4444" stop-color="#ffb245"/><stop offset="0.4691" stop-color="#ffb442"/><stop offset="0.4938" stop-color="#ffb640"/><stop offset="0.5000" stop-color="#ffb640"/><stop offset="0.5062" stop-color="#ffb541"/><stop offset="0.5185" stop-color="#ffb442"/><stop offset="0.5309" stop-color="#ffb344"/><stop offset="0.5432" stop-color="#ffb245"/><stop offset="0.5556" stop-color="#ffaf49"/><stop offset="0.5679" stop-color="#ffac4c"/><stop offset="0.5802" stop-color="#ffa950"/><stop offset="0.5926" stop-color="#ffa654"/><stop offset="0.6049" stop-color="#ffa15a"/><stop offset="0.6173" stop-color="#ff9c60"/><stop offset="0.6296" stop-color="#ff9866"/><stop offset="0.6420" stop-color="#ff936b"/><stop offset="0.6543" stop-color="#ff8e70"/><stop offset="0.6667" stop-color="#ff8777"/><stop offset="0.6790" stop-color="#ff807e"/><stop offset="0.6914" stop-color="#ff7986"/><stop offset="0.7037" stop-color="#ff738c"/><stop offset="0.7160" stop-color="#ff6e92"/><stop offset="0.7284" stop-color="#ff6a97"/><stop offset="0.7407" stop-color="#ff659d"/><stop offset="0.7531" stop-color="#ff60a2"/><stop offset="0.7654" stop-color="#f95ba9"/><stop offset="0.7778" stop-color="#f356b0"/><stop offset="0.7901" stop-color="#ec50b8"/><stop offset="0.8025" stop-color="#e34ac0"/><stop offset="0.8148" stop-color="#da43c8"/><stop offset="0.8272" stop-color="#d13dd1"/><stop offset="0.8395" stop-color="#c635d7"/><stop offset="0.8519" stop-color="#ba2ddd"/><stop offset="0.8642" stop-color="#ac24e4"/><stop offset="0.8765" stop-color="#a11fe8"/><stop offset="0.8889" stop-color="#951aeb"/><stop offset="0.9012" stop-color="#8a14ef"/><stop offset="0.9136" stop-color="#8111f2"/><stop offset="0.9259" stop-color="#790ef4"/><stop offset="0.9383" stop-color="#730cf5"/><stop offset="0.9506" stop-color="#700bf6"/><stop offset="0.9630" stop-color="#700bf6"/><stop offset="0.9753" stop-color="#700bf6"/><stop offset="0.9877" stop-color="#700bf6"/><stop offset="1.0000" stop-color="#700bf6"/></linearGradient><linearGradient id="g17" x1="0" x2="1" y1="0" y2="0"><stop offset="0.0000" stop-color="#00004f"/><stop offset="0.0247" stop-color="#000076"/><stop offset="0.0494" stop-color="#0000b0"/><stop offset="0.0741" stop-color="#0000dc"/><stop offset="0.0988" stop-color="#0000fc"/><stop offset="0.1235" stop-color="#1600ff"/><stop offset="0.1481" stop-color="#3300ff"/><stop offset="0.1728" stop-color="#5000ff"/><stop offset="0.1975" stop-color="#780df4"/><stop offset="0.2222" stop-color="#9d1de9"/><stop offset="0.2469" stop-color="#c233d9"/><stop offset="0.2716" stop-color="#e54bbe"/><stop offset="0.2963" stop-color="#f154b2"/><stop offset="0.3210" stop-color="#fa5ca8"/><stop offset="0.3457" stop-color="#ff649e"/><stop offset="0.3704" stop-color="#ff6b95"/><stop offset="0.3951" stop-color="#ff718e"/><stop offset="0.4198" stop-color="#ff7788"/><stop offset="0.4321" stop-color="#ff7a84"/><stop offset="0.4444" stop-color="#ff7c82"/><stop offset="0.4691" stop-color="#ff817d"/><stop offset="0.4938" stop-color="#ff8579"/><stop offset="0.5000" stop-color="#ff8678"/><stop offset="0.5062" stop-color="#ff8975"/><stop offset="0.5185" stop-color="#ff8876"/><stop offset="0.5309" stop-color="#ff8777"/><stop offset="0.5432" stop-color="#ff8678"/><stop offset="0.5556" stop-color="#ff847a"/><stop offset="0.5679" stop-color="#ff837b"/><stop offset="0.5802" stop-color="#ff827c"/><stop offset="0.5926" stop-color="#ff807e"/><stop offset="0.6049" stop-color="#ff7b83"/><stop offset="0.6173" stop-color="#ff7689"/><stop offset="0.6296" stop-color="#ff718e"/><stop offset="0.6420" stop-color="#ff6c94"/><stop offset="0.6543" stop-color="#ff689a"/><stop offset="0.6667" stop-color="#ff649d"/><stop offset="0.6790" stop-color="#ff61a1"/><stop offset="0.6914" stop-color="#fd5ea5"/><stop offset="0.7037" stop-color="#f759ab"/><stop offset="0.7160" stop-color="#ee52b6"/><stop offset="0.7284" stop-color="#e249c1"/><stop offset="0.7407" stop-color="#d640cd"/><stop offset="0.7531" stop-color="#c736d6"/><stop offset="0.7654" stop-color="#b72cde"/><stop offset="0.7778" stop-color="#a822e5"/><stop offset="0.7901" stop-color="#9c1de9"/><stop offset="0.8025" stop-color="#8f17ed"/><stop offset="0.8148" stop-color="#8211f1"/><stop offset="0.8272" stop-color="#730cf5"/><stop offset="0.8395" stop-color="#6507f9"/><stop offset="0.8519" stop-color="#5602fd"/><stop offset="0.8642" stop-color="#4600ff"/><stop offset="0.8765" stop-color="#3500ff"/><stop offset="0.8889" stop-color="#2400ff"/><stop offset="0.9012" stop-color="#1300ff"/><stop offset="0.9136" stop-color="#0a00fe"/><stop offset="0.9259" stop-color="#0300fd"/><stop offset="0.9383" stop-color="#0000f7"/><stop offset="0.9506" stop-color="#0000ec"/><stop offset="0.9630" stop-color="#0000dc"/><stop offset="0.9753" stop-color="#0000cd"/><stop offset="0.9877" stop-color="#0000bf"/><stop offset="1.0000" stop-color="#0000b0"/></linearGradient><linearGradient id="g18" x1="0" x2="1" y1="0" y2="0"><stop offset="0.0000" stop-color="#00000a"/><stop offset="0.0247" stop-color="#00001e"/><stop offset="0.0432" stop-color="#000063"/><stop offset="0.0494" stop-color="#000090"/><stop offset="0.0617" stop-color="#0000dc"/><stop offset="0.0741" stop-color="#0000f4"/><stop offset="0.0864" stop-color="#0b00fe"/><stop offset="0.0988" stop-color="#2700ff"/><stop offset="0.1111" stop-color="#4400ff"/><stop offset="0.1235" stop-color="#6808f8"/><stop offset="0.1358" stop-color="#8f17ed"/><stop offset="0.1481" stop-color="#b52ae0"/><stop offset="0.1605" stop-color="#de46c5"/><stop offset="0.1728" stop-color="#ee51b6"/><stop offset="0.1975" stop-color="#ff649e"/><stop offset="0.2222" stop-color="#ff7a84"/><stop offset="0.2346" stop-color="#ff8678"/><stop offset="0.2469" stop-color="#ff926c"/><stop offset="0.2716" stop-color="#ffaa4f"/><stop offset="0.2963" stop-color="#ffc434"/><stop offset="0.3086" stop-color="#ffd228"/><stop offset="0.3210" stop-color="#ffdd1f"/><stop offset="0.3457" stop-color="#fff20c"/><stop offset="0.3704" stop-color="#fff533"/><stop offset="0.3827" stop-color="#fff647"/><stop offset="0.3951" stop-color="#fff868"/><stop offset="0.4198" stop-color="#fffcac"/><stop offset="0.4444" stop-color="#fffee3"/><stop offset="0.4568" stop-color="#ffffff"/><stop offset="0.4691" stop-color="#ffffff"/><stop offset="0.4938" stop-color="#ffffff"/><stop offset="0.5000" stop-color="#ffffff"/><stop offset="0.5062" stop-color="#ffffff"/><stop offset="0.5185" stop-color="#ffffff"/><stop offset="0.5309" stop-color="#ffffff"/><stop offset="0.5432" stop-color="#fffff9"/><stop offset="0.5556" stop-color="#fffedc"/><stop offset="0.5679" stop-color="#fffcbf"/><stop offset="0.5802" stop-color="#fffb9f"/><stop offset="0.5926" stop-color="#fff97a"/><stop offset="0.6049" stop-color="#fff758"/><stop offset="0.6173" stop-color="#fff53c"/><stop offset="0.6296" stop-color="#fff427"/><stop offset="0.6420" stop-color="#fff213"/><stop offset="0.6543" stop-color="#ffea13"/><stop offset="0.6667" stop-color="#ffdf1d"/><stop offset="0.6790" stop-color="#ffd427"/><stop offset="0.6914" stop-color="#ffc533"/><stop offset="0.7037" stop-color="#ffb73f"/><stop offset="0.7160" stop-color="#ffaa4f"/><stop offset="0.7284" stop-color="#ff9d5f"/><stop offset="0.7407" stop-color="#ff906e"/><stop offset="0.7531" stop-color="#ff847a"/><stop offset="0.7654" stop-color="#ff7787"/><stop offset="0.7778" stop-color="#ff6c95"/><stop offset="0.7901" stop-color="#ff61a1"/><stop offset="0.8025" stop-color="#f457af"/><stop offset="0.8148" stop-color="#e74cbd"/><stop offset="0.8272" stop-color="#ca38d5"/><stop offset="0.8395" stop-color="#9e1de9"/><stop offset="0.8519" stop-color="#760df5"/><stop offset="0.8642" stop-color="#4d00ff"/><stop offset="0.8765" stop-color="#2e00ff"/><stop offset="0.8889" stop-color="#0f00ff"/><stop offset="0.9012" stop-color="#0000f7"/><stop offset="0.9136" stop-color="#0000dd"/><stop offset="0.9259" stop-color="#000090"/><stop offset="0.9383" stop-color="#000090"/><stop offset="0.9506" stop-color="#000090"/><stop offset="0.9630" stop-color="#000042"/><stop offset="0.9753" stop-color="#00001e"/><stop offset="0.9877" stop-color="#000014"/><stop offset="1.0000" stop-color="#00000a"/></linearGradient><linearGradient id="g19" x1="0" x2="0" y1="0" y2="1"><stop offset="0.0000" stop-color="#00004f"/><stop offset="0.0282" stop-color="#00008d"/><stop offset="0.0563" stop-color="#0000c5"/><stop offset="0.0704" stop-color="#0000dc"/><stop offset="0.0845" stop-color="#0000f0"/><stop offset="0.1127" stop-color="#1300ff"/><stop offset="0.1268" stop-color="#2100ff"/><stop offset="0.1408" stop-color="#2d00ff"/><stop offset="0.1690" stop-color="#4400ff"/><stop offset="0.1972" stop-color="#6005fb"/><stop offset="0.2254" stop-color="#8713f0"/><stop offset="0.2535" stop-color="#ac24e4"/><stop offset="0.2817" stop-color="#d43ecf"/><stop offset="0.3099" stop-color="#f154b2"/><stop offset="0.3380" stop-color="#f658ad"/><stop offset="0.3662" stop-color="#fa5ca8"/><stop offset="0.3944" stop-color="#fb5da6"/><stop offset="0.4225" stop-color="#fc5ea5"/><stop offset="0.4507" stop-color="#fd5ea4"/><stop offset="0.4789" stop-color="#fe5fa3"/><stop offset="0.5211" stop-color="#fe5fa3"/><stop offset="0.5493" stop-color="#fd5ea4"/><stop offset="0.5775" stop-color="#fc5ea5"/><stop offset="0.6056" stop-color="#fb5da6"/><stop offset="0.6338" stop-color="#fa5ca8"/><stop offset="0.6620" stop-color="#f658ad"/><stop offset="0.6901" stop-color="#f154b2"/><stop offset="0.7183" stop-color="#d43ecf"/><stop offset="0.7465" stop-color="#ac24e4"/><stop offset="0.7746" stop-color="#8713f0"/><stop offset="0.8028" stop-color="#6005fb"/><stop offset="0.8310" stop-color="#4400ff"/><stop offset="0.8592" stop-color="#2d00ff"/><stop offset="0.8732" stop-color="#2100ff"/><stop offset="0.8873" stop-color="#1300ff"/><stop offset="0.9155" stop-color="#0000f0"/><stop offset="0.9296" stop-color="#0000dc"/><stop offset="0.9437" stop-color="#0000c5"/><stop offset="0.9718" stop-color="#00008d"/><stop offset="1.0000" stop-color="#00004f"/></linearGradient><linearGradient id="g20" x1="0" x2="0" y1="0" y2="1"><stop offset="0.0000" stop-color="#000089"/><stop offset="0.0282" stop-color="#0000a6"/><stop offset="0.0563" stop-color="#0000bf"/><stop offset="0.0845" stop-color="#0000f4"/><stop offset="0.1127" stop-color="#0000f9"/><stop offset="0.1408" stop-color="#0200fc"/><stop offset="0.1690" stop-color="#0500fd"/><stop offset="0.1972" stop-color="#3500ff"/><stop offset="0.2197" stop-color="#6005fb"/><stop offset="0.2254" stop-color="#6908f8"/><stop offset="0.2535" stop-color="#9318ec"/><stop offset="0.2817" stop-color="#be30db"/><stop offset="0.3099" stop-color="#dd46c6"/><stop offset="0.3380" stop-color="#f557ae"/><stop offset="0.3465" stop-color="#fa5ca8"/><stop offset="0.3662" stop-color="#fb5da6"/><stop offset="0.3944" stop-color="#fd5fa4"/><stop offset="0.4225" stop-color="#ff60a2"/><stop offset="0.4507" stop-color="#ff60a2"/><stop offset="0.4789" stop-color="#ff60a2"/><stop offset="0.5211" stop-color="#ff60a2"/><stop offset="0.5493" stop-color="#ff60a2"/><stop offset="0.5775" stop-color="#ff60a2"/><stop offset="0.6056" stop-color="#fd5fa4"/><stop offset="0.6338" stop-color="#fb5da6"/><stop offset="0.6535" stop-color="#fa5ca8"/><stop offset="0.6620" stop-color="#f557ae"/><stop offset="0.6901" stop-color="#dd46c6"/><stop offset="0.7183" stop-color="#be30db"/><stop offset="0.7465" stop-color="#9318ec"/><stop offset="0.7746" stop-color="#6908f8"/><stop offset="0.7803" stop-color="#6005fb"/><stop offset="0.8028" stop-color="#3500ff"/><stop offset="0.8310" stop-color="#0500fd"/><stop offset="0.8592" stop-color="#0200fc"/><stop offset="0.8873" stop-color="#0000f9"/><stop offset="0.9155" stop-color="#0000f4"/><stop offset="0.9437" stop-color="#0000bf"/><stop offset="0.9718" stop-color="#0000a6"/><stop offset="1.0000" stop-color="#000089"/></linearGradient><linearGradient id="cbar" x1="0" x2="0" y1="0" y2="1"><stop offset="0.000" stop-color="#ffffff"/><stop offset="0.050" stop-color="#fffa82"/><stop offset="0.100" stop-color="#fff20c"/><stop offset="0.167" stop-color="#ffd228"/><stop offset="0.217" stop-color="#ffb640"/><stop offset="0.283" stop-color="#ff9668"/><stop offset="0.333" stop-color="#ff7e80"/><stop offset="0.400" stop-color="#ff60a2"/><stop offset="0.433" stop-color="#ee50b8"/><stop offset="0.467" stop-color="#d63ece"/><stop offset="0.500" stop-color="#bc2ce0"/><stop offset="0.540" stop-color="#a018f0"/><stop offset="0.575" stop-color="#800cf8"/><stop offset="0.617" stop-color="#6000ff"/><stop offset="0.650" stop-color="#4000ff"/><stop offset="0.700" stop-color="#1800ff"/><stop offset="0.725" stop-color="#0400fc"/><stop offset="0.750" stop-color="#0000ec"/><stop offset="0.800" stop-color="#0000c4"/><stop offset="0.883" stop-color="#000076"/><stop offset="0.933" stop-color="#00003e"/><stop offset="0.967" stop-color="#00001e"/><stop offset="1.000" stop-color="#000000"/></linearGradient></defs><g shape-rendering="crispEdges">
<rect x="32" y="39" width="672" height="671" fill="none" stroke="#e6edf6" stroke-width="4"/>
<rect x="32" y="39" width="672" height="671" fill="none" stroke="#fba428" stroke-width="2"/>
<rect x="103" y="111" width="86" height="84" fill="#e0f6f6"/>
<rect x="104" y="112" width="84" height="82" fill="#ebebeb"/>
<rect x="251" y="111" width="86" height="84" fill="#e0f6f6"/>
<rect x="252" y="112" width="84" height="82" fill="#ebebeb"/>
<rect x="399" y="111" width="86" height="84" fill="#e0f6f6"/>
<rect x="400" y="112" width="84" height="82" fill="#ebebeb"/>
<rect x="547" y="111" width="86" height="84" fill="#e0f6f6"/>
<rect x="548" y="112" width="84" height="82" fill="#ebebeb"/>
<rect x="103" y="258" width="86" height="85" fill="#e0f6f6"/>
<rect x="104" y="259" width="84" height="83" fill="#ebebeb"/>
<rect x="251" y="258" width="86" height="85" fill="#e0f6f6"/>
<rect x="252" y="259" width="84" height="83" fill="#ebebeb"/>
<rect x="399" y="258" width="86" height="85" fill="#e0f6f6"/>
<rect x="400" y="259" width="84" height="83" fill="#ebebeb"/>
<rect x="547" y="258" width="86" height="85" fill="#e0f6f6"/>
<rect x="548" y="259" width="84" height="83" fill="#ebebeb"/>
<rect x="103" y="406" width="86" height="85" fill="#e0f6f6"/>
<rect x="104" y="407" width="84" height="83" fill="#ebebeb"/>
<rect x="251" y="406" width="86" height="85" fill="#e0f6f6"/>
<rect x="252" y="407" width="84" height="83" fill="#ebebeb"/>
<rect x="399" y="406" width="86" height="85" fill="#e0f6f6"/>
<rect x="400" y="407" width="84" height="83" fill="#ebebeb"/>
<rect x="547" y="406" width="86" height="85" fill="#e0f6f6"/>
<rect x="548" y="407" width="84" height="83" fill="#ebebeb"/>
<rect x="103" y="554" width="86" height="84" fill="#e0f6f6"/>
<rect x="104" y="555" width="84" height="82" fill="#ebebeb"/>
<rect x="251" y="554" width="86" height="84" fill="#e0f6f6"/>
<rect x="252" y="555" width="84" height="82" fill="#ebebeb"/>
<rect x="399" y="554" width="86" height="84" fill="#e0f6f6"/>
<rect x="400" y="555" width="84" height="82" fill="#ebebeb"/>
<rect x="547" y="554" width="86" height="84" fill="#e0f6f6"/>
<rect x="548" y="555" width="84" height="82" fill="#ebebeb"/>
<rect x="104" y="113" width="2" height="80" fill="#ff0000"/>
<rect x="187" y="113" width="1" height="80" fill="#ff0000"/>
<rect x="106" y="112" width="81" height="1" fill="#ff0000"/>
<rect x="106" y="193" width="81" height="1" fill="#ff0000"/>
<rect x="252" y="113" width="2" height="80" fill="#ff0000"/>
<rect x="335" y="113" width="1" height="80" fill="#ff0000"/>
<rect x="254" y="112" width="81" height="1" fill="#ff0000"/>
<rect x="254" y="193" width="81" height="1" fill="#ff0000"/>
<rect x="400" y="113" width="1" height="80" fill="#ff0000"/>
<rect x="482" y="113" width="2" height="80" fill="#ff0000"/>
<rect x="401" y="112" width="81" height="1" fill="#ff0000"/>
<rect x="401" y="193" width="81" height="1" fill="#ff0000"/>
<rect x="548" y="113" width="1" height="80" fill="#ff0000"/>
<rect x="630" y="113" width="2" height="80" fill="#ff0000"/>
<rect x="549" y="112" width="81" height="1" fill="#ff0000"/>
<rect x="549" y="193" width="81" height="1" fill="#ff0000"/>
<rect x="104" y="261" width="2" height="79" fill="#ff0000"/>
<rect x="187" y="261" width="1" height="79" fill="#ff0000"/>
<rect x="106" y="259" width="81" height="2" fill="#ff0000"/>
<rect x="106" y="340" width="81" height="2" fill="#ff0000"/>
<rect x="252" y="261" width="2" height="79" fill="#ff0000"/>
<rect x="335" y="261" width="1" height="79" fill="#ff0000"/>
<rect x="254" y="259" width="81" height="2" fill="#ff0000"/>
<rect x="254" y="340" width="81" height="2" fill="#ff0000"/>
<rect x="400" y="261" width="1" height="79" fill="#ff0000"/>
<rect x="482" y="261" width="2" height="79" fill="#ff0000"/>
<rect x="401" y="259" width="81" height="2" fill="#ff0000"/>
<rect x="401" y="340" width="81" height="2" fill="#ff0000"/>
<rect x="548" y="261" width="1" height="79" fill="#ff0000"/>
<rect x="630" y="261" width="2" height="79" fill="#ff0000"/>
<rect x="549" y="259" width="81" height="2" fill="#ff0000"/>
<rect x="549" y="340" width="81" height="2" fill="#ff0000"/>
<rect x="104" y="409" width="2" height="79" fill="#ff0000"/>
<rect x="187" y="409" width="1" height="79" fill="#ff0000"/>
<rect x="106" y="407" width="81" height="2" fill="#ff0000"/>
<rect x="106" y="488" width="81" height="2" fill="#ff0000"/>
<rect x="252" y="409" width="2" height="79" fill="#ff0000"/>
<rect x="335" y="409" width="1" height="79" fill="#ff0000"/>
<rect x="254" y="407" width="81" height="2" fill="#ff0000"/>
<rect x="254" y="488" width="81" height="2" fill="#ff0000"/>
<rect x="400" y="409" width="1" height="79" fill="#ff0000"/>
<rect x="482" y="409" width="2" height="79" fill="#ff0000"/>
<rect x="401" y="407" width="81" height="2" fill="#ff0000"/>
<rect x="401" y="488" width="81" height="2" fill="#ff0000"/>
<rect x="548" y="409" width="1" height="79" fill="#ff0000"/>
<rect x="630" y="409" width="2" height="79" fill="#ff0000"/>
<rect x="549" y="407" width="81" height="2" fill="#ff0000"/>
<rect x="549" y="488" width="81" height="2" fill="#ff0000"/>
<rect x="104" y="556" width="2" height="80" fill="#ff0000"/>
<rect x="187" y="556" width="1" height="80" fill="#ff0000"/>
<rect x="106" y="555" width="81" height="1" fill="#ff0000"/>
<rect x="106" y="636" width="81" height="1" fill="#ff0000"/>
<rect x="252" y="556" width="2" height="80" fill="#ff0000"/>
<rect x="335" y="556" width="1" height="80" fill="#ff0000"/>
<rect x="254" y="555" width="81" height="1" fill="#ff0000"/>
<rect x="254" y="636" width="81" height="1" fill="#ff0000"/>
<rect x="400" y="556" width="1" height="80" fill="#ff0000"/>
<rect x="482" y="556" width="2" height="80" fill="#ff0000"/>
<rect x="401" y="555" width="81" height="1" fill="#ff0000"/>
<rect x="401" y="636" width="81" height="1" fill="#ff0000"/>
<rect x="548" y="556" width="1" height="80" fill="#ff0000"/>
<rect x="630" y="556" width="2" height="80" fill="#ff0000"/>
<rect x="549" y="555" width="81" height="1" fill="#ff0000"/>
<rect x="549" y="636" width="81" height="1" fill="#ff0000"/>
<rect x="6" y="0" width="1" height="739" fill="#d3d3d3"/>
<rect x="21" y="0" width="1" height="739" fill="#d3d3d3"/>
<rect x="37" y="0" width="1" height="739" fill="#d3d3d3"/>
<rect x="53" y="0" width="1" height="739" fill="#d3d3d3"/>
<rect x="68" y="0" width="1" height="739" fill="#d3d3d3"/>
<rect x="84" y="0" width="1" height="739" fill="#d3d3d3"/>
<rect x="99" y="0" width="1" height="739" fill="#d3d3d3"/>
<rect x="115" y="0" width="1" height="739" fill="#d3d3d3"/>
<rect x="130" y="0" width="1" height="739" fill="#d3d3d3"/>
<rect x="145" y="0" width="2" height="739" fill="#d3d3d3"/>
<rect x="161" y="0" width="1" height="739" fill="#d3d3d3"/>
<rect x="177" y="0" width="1" height="739" fill="#d3d3d3"/>
<rect x="192" y="0" width="1" height="739" fill="#d3d3d3"/>
<rect x="208" y="0" width="1" height="739" fill="#d3d3d3"/>
<rect x="224" y="0" width="1" height="739" fill="#d3d3d3"/>
<rect x="239" y="0" width="1" height="739" fill="#d3d3d3"/>
<rect x="255" y="0" width="1" height="739" fill="#d3d3d3"/>
<rect x="270" y="0" width="1" height="739" fill="#d3d3d3"/>
<rect x="286" y="0" width="1" height="739" fill="#d3d3d3"/>
<rect x="301" y="0" width="2" height="739" fill="#d3d3d3"/>
<rect x="317" y="0" width="1" height="739" fill="#d3d3d3"/>
<rect x="332" y="0" width="1" height="739" fill="#d3d3d3"/>
<rect x="348" y="0" width="1" height="739" fill="#d3d3d3"/>
<rect x="364" y="0" width="1" height="739" fill="#d3d3d3"/>
<rect x="379" y="0" width="1" height="739" fill="#d3d3d3"/>
<rect x="395" y="0" width="1" height="739" fill="#d3d3d3"/>
<rect x="410" y="0" width="1" height="739" fill="#d3d3d3"/>
<rect x="426" y="0" width="1" height="739" fill="#d3d3d3"/>
<rect x="441" y="0" width="1" height="739" fill="#d3d3d3"/>
<rect x="456" y="0" width="2" height="739" fill="#d3d3d3"/>
<rect x="472" y="0" width="1" height="739" fill="#d3d3d3"/>
<rect x="488" y="0" width="1" height="739" fill="#d3d3d3"/>
<rect x="503" y="0" width="1" height="739" fill="#d3d3d3"/>
<rect x="519" y="0" width="1" height="739" fill="#d3d3d3"/>
<rect x="535" y="0" width="1" height="739" fill="#d3d3d3"/>
<rect x="550" y="0" width="1" height="739" fill="#d3d3d3"/>
<rect x="566" y="0" width="1" height="739" fill="#d3d3d3"/>
<rect x="581" y="0" width="1" height="739" fill="#d3d3d3"/>
<rect x="597" y="0" width="1" height="739" fill="#d3d3d3"/>
<rect x="612" y="0" width="2" height="739" fill="#d3d3d3"/>
<rect x="628" y="0" width="1" height="739" fill="#d3d3d3"/>
<rect x="643" y="0" width="1" height="739" fill="#d3d3d3"/>
<rect x="659" y="0" width="1" height="739" fill="#d3d3d3"/>
<rect x="675" y="0" width="1" height="739" fill="#d3d3d3"/>
<rect x="690" y="0" width="1" height="739" fill="#d3d3d3"/>
<rect x="706" y="0" width="1" height="739" fill="#d3d3d3"/>
<rect x="721" y="0" width="1" height="739" fill="#d3d3d3"/>
<rect x="737" y="0" width="1" height="739" fill="#d3d3d3"/>
<rect x="752" y="0" width="1" height="739" fill="#d3d3d3"/>
<rect x="767" y="0" width="2" height="739" fill="#d3d3d3"/>
<rect x="783" y="0" width="1" height="739" fill="#d3d3d3"/>
<rect x="799" y="0" width="1" height="739" fill="#d3d3d3"/>
<rect x="814" y="0" width="1" height="739" fill="#d3d3d3"/>
<rect x="830" y="0" width="1" height="739" fill="#d3d3d3"/>
<rect x="846" y="0" width="1" height="739" fill="#d3d3d3"/>
<rect x="861" y="0" width="1" height="739" fill="#d3d3d3"/>
<rect x="877" y="0" width="1" height="739" fill="#d3d3d3"/>
<rect x="0" y="736" width="889" height="1" fill="#d3d3d3"/>
<rect x="0" y="720" width="889" height="1" fill="#d3d3d3"/>
<rect x="0" y="704" width="889" height="1" fill="#d3d3d3"/>
<rect x="0" y="689" width="889" height="1" fill="#d3d3d3"/>
<rect x="0" y="673" width="889" height="1" fill="#d3d3d3"/>
<rect x="0" y="658" width="889" height="1" fill="#d3d3d3"/>
<rect x="0" y="642" width="889" height="1" fill="#d3d3d3"/>
<rect x="0" y="627" width="889" height="1" fill="#d3d3d3"/>
<rect x="0" y="611" width="889" height="1" fill="#d3d3d3"/>
<rect x="0" y="595" width="889" height="2" fill="#d3d3d3"/>
<rect x="0" y="580" width="889" height="1" fill="#d3d3d3"/>
<rect x="0" y="565" width="889" height="1" fill="#d3d3d3"/>
<rect x="0" y="549" width="889" height="1" fill="#d3d3d3"/>
<rect x="0" y="533" width="889" height="1" fill="#d3d3d3"/>
<rect x="0" y="518" width="889" height="1" fill="#d3d3d3"/>
<rect x="0" y="502" width="889" height="1" fill="#d3d3d3"/>
<rect x="0" y="487" width="889" height="1" fill="#d3d3d3"/>
<rect x="0" y="471" width="889" height="1" fill="#d3d3d3"/>
<rect x="0" y="456" width="889" height="1" fill="#d3d3d3"/>
<rect x="0" y="440" width="889" height="2" fill="#d3d3d3"/>
<rect x="0" y="425" width="889" height="1" fill="#d3d3d3"/>
<rect x="0" y="409" width="889" height="1" fill="#d3d3d3"/>
<rect x="0" y="393" width="889" height="1" fill="#d3d3d3"/>
<rect x="0" y="378" width="889" height="1" fill="#d3d3d3"/>
<rect x="0" y="362" width="889" height="1" fill="#d3d3d3"/>
<rect x="0" y="347" width="889" height="1" fill="#d3d3d3"/>
<rect x="0" y="331" width="889" height="1" fill="#d3d3d3"/>
<rect x="0" y="316" width="889" height="1" fill="#d3d3d3"/>
<rect x="0" y="300" width="889" height="1" fill="#d3d3d3"/>
<rect x="0" y="284" width="889" height="2" fill="#d3d3d3"/>
<rect x="0" y="269" width="889" height="1" fill="#d3d3d3"/>
<rect x="0" y="254" width="889" height="1" fill="#d3d3d3"/>
<rect x="0" y="238" width="889" height="1" fill="#d3d3d3"/>
<rect x="0" y="222" width="889" height="1" fill="#d3d3d3"/>
<rect x="0" y="207" width="889" height="1" fill="#d3d3d3"/>
<rect x="0" y="191" width="889" height="1" fill="#d3d3d3"/>
<rect x="0" y="176" width="889" height="1" fill="#d3d3d3"/>
<rect x="0" y="160" width="889" height="1" fill="#d3d3d3"/>
<rect x="0" y="145" width="889" height="1" fill="#d3d3d3"/>
<rect x="0" y="129" width="889" height="2" fill="#d3d3d3"/>
<rect x="0" y="114" width="889" height="1" fill="#d3d3d3"/>
<rect x="0" y="98" width="889" height="1" fill="#d3d3d3"/>
<rect x="0" y="82" width="889" height="1" fill="#d3d3d3"/>
<rect x="0" y="67" width="889" height="1" fill="#d3d3d3"/>
<rect x="0" y="51" width="889" height="1" fill="#d3d3d3"/>
<rect x="0" y="36" width="889" height="1" fill="#d3d3d3"/>
<rect x="0" y="20" width="889" height="1" fill="#d3d3d3"/>
<rect x="0" y="5" width="889" height="1" fill="#d3d3d3"/>
<rect x="144" y="0" width="4" height="596" fill="#f4e4f4"/>
<rect x="146" y="594" width="743" height="4" fill="#e0f6f6"/>
<rect x="145" y="0" width="2" height="596" fill="#00ff00"/>
<rect x="146" y="595" width="743" height="2" fill="#ff0000"/>
</g>
<rect x="106" y="113" width="81" height="80" fill="url(#g1)"/>
<rect x="106" y="117" width="81" height="34" fill="url(#g2)" mask="url(#mT)"/>
<rect x="106" y="155" width="81" height="34" fill="url(#g2)" mask="url(#mB)"/>
<rect x="106" y="117" width="4" height="72" fill="url(#g4)"/>
<rect x="183" y="117" width="4" height="72" fill="url(#g5)"/>
<rect x="106" y="113" width="81" height="4" fill="url(#g3)"/>
<rect x="106" y="189" width="81" height="4" fill="url(#g3)"/>
<rect x="118" y="154" width="9" height="8" fill="#00004d" opacity="0.25"/>
<rect x="120" y="156" width="3" height="4" fill="#00005b" opacity="0.6"/>
<rect x="122" y="158" width="2" height="2" fill="#000008"/>
<rect x="254" y="113" width="81" height="80" fill="url(#g6)"/>
<rect x="254" y="117" width="81" height="34" fill="url(#g7)" mask="url(#mT)"/>
<rect x="254" y="155" width="81" height="34" fill="url(#g7)" mask="url(#mB)"/>
<rect x="254" y="117" width="4" height="72" fill="url(#g9)"/>
<rect x="331" y="117" width="4" height="72" fill="url(#g10)"/>
<rect x="254" y="113" width="81" height="4" fill="url(#g8)"/>
<rect x="254" y="189" width="81" height="4" fill="url(#g8)"/>
<rect x="266" y="154" width="9" height="8" fill="#0900fe" opacity="0.25"/>
<rect x="268" y="156" width="3" height="4" fill="#1d00ff" opacity="0.6"/>
<rect x="270" y="158" width="2" height="2" fill="#000015"/>
<rect x="401" y="113" width="81" height="80" fill="url(#g6)"/>
<rect x="401" y="117" width="81" height="34" fill="url(#g7)" mask="url(#mT)"/>
<rect x="401" y="155" width="81" height="34" fill="url(#g7)" mask="url(#mB)"/>
<rect x="401" y="117" width="4" height="72" fill="url(#g9)"/>
<rect x="478" y="117" width="4" height="72" fill="url(#g10)"/>
<rect x="401" y="113" width="81" height="4" fill="url(#g8)"/>
<rect x="401" y="189" width="81" height="4" fill="url(#g8)"/>
<rect x="413" y="154" width="9" height="8" fill="#0900fe" opacity="0.25"/>
<rect x="415" y="156" width="3" height="4" fill="#1d00ff" opacity="0.6"/>
<rect x="417" y="158" width="2" height="2" fill="#000015"/>
<rect x="549" y="113" width="81" height="80" fill="url(#g1)"/>
<rect x="549" y="117" width="81" height="34" fill="url(#g2)" mask="url(#mT)"/>
<rect x="549" y="155" width="81" height="34" fill="url(#g2)" mask="url(#mB)"/>
<rect x="549" y="117" width="4" height="72" fill="url(#g4)"/>
<rect x="626" y="117" width="4" height="72" fill="url(#g5)"/>
<rect x="549" y="113" width="81" height="4" fill="url(#g3)"/>
<rect x="549" y="189" width="81" height="4" fill="url(#g3)"/>
<rect x="561" y="154" width="9" height="8" fill="#00004d" opacity="0.25"/>
<rect x="563" y="156" width="3" height="4" fill="#00005b" opacity="0.6"/>
<rect x="565" y="158" width="2" height="2" fill="#000008"/>
<rect x="106" y="261" width="81" height="79" fill="url(#g11)"/>
<rect x="106" y="265" width="81" height="34" fill="url(#g12)" mask="url(#mT)"/>
<rect x="106" y="302" width="81" height="34" fill="url(#g12)" mask="url(#mB)"/>
<rect x="106" y="265" width="4" height="71" fill="url(#g14)"/>
<rect x="183" y="265" width="4" height="71" fill="url(#g15)"/>
<rect x="106" y="261" width="81" height="4" fill="url(#g13)"/>
<rect x="106" y="336" width="81" height="4" fill="url(#g13)"/>
<rect x="118" y="302" width="9" height="8" fill="#0000e9" opacity="0.25"/>
<rect x="120" y="304" width="3" height="4" fill="#0400fd" opacity="0.6"/>
<rect x="122" y="306" width="2" height="2" fill="#000013"/>
<rect x="254" y="261" width="81" height="79" fill="url(#g16)"/>
<rect x="254" y="265" width="81" height="34" fill="url(#g17)" mask="url(#mT)"/>
<rect x="254" y="302" width="81" height="34" fill="url(#g17)" mask="url(#mB)"/>
<rect x="254" y="265" width="4" height="71" fill="url(#g19)"/>
<rect x="331" y="265" width="4" height="71" fill="url(#g20)"/>
<rect x="254" y="261" width="81" height="4" fill="url(#g18)"/>
<rect x="254" y="336" width="81" height="4" fill="url(#g18)"/>
<rect x="266" y="302" width="11" height="8" fill="#ff7e80" opacity="0.35"/>
<rect x="266" y="310" width="12" height="3" fill="#be30db" opacity="0.45"/>
<rect x="268" y="302" width="3" height="2" fill="#ffa654" opacity="0.7"/>
<rect x="270" y="303" width="2" height="3" fill="#ffda21" opacity="0.9"/>
<rect x="268" y="304" width="2" height="4" fill="#fff20c"/>
<rect x="272" y="308" width="2" height="2" fill="#8f17ed" opacity="0.85"/>
<rect x="270" y="306" width="2" height="2" fill="#00004f"/>
<rect x="401" y="261" width="81" height="79" fill="url(#g16)"/>
<rect x="401" y="265" width="81" height="34" fill="url(#g17)" mask="url(#mT)"/>
<rect x="401" y="302" width="81" height="34" fill="url(#g17)" mask="url(#mB)"/>
<rect x="401" y="265" width="4" height="71" fill="url(#g19)"/>
<rect x="478" y="265" width="4" height="71" fill="url(#g20)"/>
<rect x="401" y="261" width="81" height="4" fill="url(#g18)"/>
<rect x="401" y="336" width="81" height="4" fill="url(#g18)"/>
<rect x="413" y="302" width="11" height="8" fill="#ff7e80" opacity="0.35"/>
<rect x="413" y="310" width="12" height="3" fill="#be30db" opacity="0.45"/>
<rect x="415" y="302" width="3" height="2" fill="#ffa654" opacity="0.7"/>
<rect x="417" y="303" width="2" height="3" fill="#ffda21" opacity="0.9"/>
<rect x="415" y="304" width="2" height="4" fill="#fff20c"/>
<rect x="419" y="308" width="2" height="2" fill="#8f17ed" opacity="0.85"/>
<rect x="417" y="306" width="2" height="2" fill="#00004f"/>
<rect x="549" y="261" width="81" height="79" fill="url(#g11)"/>
<rect x="549" y="265" width="81" height="34" fill="url(#g12)" mask="url(#mT)"/>
<rect x="549" y="302" width="81" height="34" fill="url(#g12)" mask="url(#mB)"/>
<rect x="549" y="265" width="4" height="71" fill="url(#g14)"/>
<rect x="626" y="265" width="4" height="71" fill="url(#g15)"/>
<rect x="549" y="261" width="81" height="4" fill="url(#g13)"/>
<rect x="549" y="336" width="81" height="4" fill="url(#g13)"/>
<rect x="561" y="302" width="9" height="8" fill="#0000e9" opacity="0.25"/>
<rect x="563" y="304" width="3" height="4" fill="#0400fd" opacity="0.6"/>
<rect x="565" y="306" width="2" height="2" fill="#000013"/>
<rect x="106" y="409" width="81" height="79" fill="url(#g11)"/>
<rect x="106" y="413" width="81" height="34" fill="url(#g12)" mask="url(#mT)"/>
<rect x="106" y="450" width="81" height="34" fill="url(#g12)" mask="url(#mB)"/>
<rect x="106" y="413" width="4" height="71" fill="url(#g14)"/>
<rect x="183" y="413" width="4" height="71" fill="url(#g15)"/>
<rect x="106" y="409" width="81" height="4" fill="url(#g13)"/>
<rect x="106" y="484" width="81" height="4" fill="url(#g13)"/>
<rect x="118" y="450" width="9" height="8" fill="#0000e9" opacity="0.25"/>
<rect x="120" y="452" width="3" height="4" fill="#0400fd" opacity="0.6"/>
<rect x="122" y="454" width="2" height="2" fill="#000013"/>
<rect x="254" y="409" width="81" height="79" fill="url(#g16)"/>
<rect x="254" y="413" width="81" height="34" fill="url(#g17)" mask="url(#mT)"/>
<rect x="254" y="450" width="81" height="34" fill="url(#g17)" mask="url(#mB)"/>
<rect x="254" y="413" width="4" height="71" fill="url(#g19)"/>
<rect x="331" y="413" width="4" height="71" fill="url(#g20)"/>
<rect x="254" y="409" width="81" height="4" fill="url(#g18)"/>
<rect x="254" y="484" width="81" height="4" fill="url(#g18)"/>
<rect x="266" y="450" width="11" height="8" fill="#ff7e80" opacity="0.35"/>
<rect x="266" y="458" width="12" height="3" fill="#be30db" opacity="0.45"/>
<rect x="268" y="450" width="3" height="2" fill="#ffa654" opacity="0.7"/>
<rect x="270" y="451" width="2" height="3" fill="#ffda21" opacity="0.9"/>
<rect x="268" y="452" width="2" height="4" fill="#fff20c"/>
<rect x="272" y="456" width="2" height="2" fill="#8f17ed" opacity="0.85"/>
<rect x="270" y="454" width="2" height="2" fill="#00004f"/>
<rect x="401" y="409" width="81" height="79" fill="url(#g16)"/>
<rect x="401" y="413" width="81" height="34" fill="url(#g17)" mask="url(#mT)"/>
<rect x="401" y="450" width="81" height="34" fill="url(#g17)" mask="url(#mB)"/>
<rect x="401" y="413" width="4" height="71" fill="url(#g19)"/>
<rect x="478" y="413" width="4" height="71" fill="url(#g20)"/>
<rect x="401" y="409" width="81" height="4" fill="url(#g18)"/>
<rect x="401" y="484" width="81" height="4" fill="url(#g18)"/>
<rect x="413" y="450" width="11" height="8" fill="#ff7e80" opacity="0.35"/>
<rect x="413" y="458" width="12" height="3" fill="#be30db" opacity="0.45"/>
<rect x="415" y="450" width="3" height="2" fill="#ffa654" opacity="0.7"/>
<rect x="417" y="451" width="2" height="3" fill="#ffda21" opacity="0.9"/>
<rect x="415" y="452" width="2" height="4" fill="#fff20c"/>
<rect x="419" y="456" width="2" height="2" fill="#8f17ed" opacity="0.85"/>
<rect x="417" y="454" width="2" height="2" fill="#00004f"/>
<rect x="549" y="409" width="81" height="79" fill="url(#g11)"/>
<rect x="549" y="413" width="81" height="34" fill="url(#g12)" mask="url(#mT)"/>
<rect x="549" y="450" width="81" height="34" fill="url(#g12)" mask="url(#mB)"/>
<rect x="549" y="413" width="4" height="71" fill="url(#g14)"/>
<rect x="626" y="413" width="4" height="71" fill="url(#g15)"/>
<rect x="549" y="409" width="81" height="4" fill="url(#g13)"/>
<rect x="549" y="484" width="81" height="4" fill="url(#g13)"/>
<rect x="561" y="450" width="9" height="8" fill="#0000e9" opacity="0.25"/>
<rect x="563" y="452" width="3" height="4" fill="#0400fd" opacity="0.6"/>
<rect x="565" y="454" width="2" height="2" fill="#000013"/>
<rect x="106" y="556" width="81" height="80" fill="url(#g1)"/>
<rect x="106" y="560" width="81" height="34" fill="url(#g2)" mask="url(#mT)"/>
<rect x="106" y="598" width="81" height="34" fill="url(#g2)" mask="url(#mB)"/>
<rect x="106" y="560" width="4" height="72" fill="url(#g4)"/>
<rect x="183" y="560" width="4" height="72" fill="url(#g5)"/>
<rect x="106" y="556" width="81" height="4" fill="url(#g3)"/>
<rect x="106" y="632" width="81" height="4" fill="url(#g3)"/>
<rect x="118" y="597" width="9" height="8" fill="#00004d" opacity="0.25"/>
<rect x="120" y="599" width="3" height="4" fill="#00005b" opacity="0.6"/>
<rect x="122" y="601" width="2" height="2" fill="#000008"/>
<rect x="254" y="556" width="81" height="80" fill="url(#g6)"/>
<rect x="254" y="560" width="81" height="34" fill="url(#g7)" mask="url(#mT)"/>
<rect x="254" y="598" width="81" height="34" fill="url(#g7)" mask="url(#mB)"/>
<rect x="254" y="560" width="4" height="72" fill="url(#g9)"/>
<rect x="331" y="560" width="4" height="72" fill="url(#g10)"/>
<rect x="254" y="556" width="81" height="4" fill="url(#g8)"/>
<rect x="254" y="632" width="81" height="4" fill="url(#g8)"/>
<rect x="266" y="597" width="9" height="8" fill="#0900fe" opacity="0.25"/>
<rect x="268" y="599" width="3" height="4" fill="#1d00ff" opacity="0.6"/>
<rect x="270" y="601" width="2" height="2" fill="#000015"/>
<rect x="401" y="556" width="81" height="80" fill="url(#g6)"/>
<rect x="401" y="560" width="81" height="34" fill="url(#g7)" mask="url(#mT)"/>
<rect x="401" y="598" width="81" height="34" fill="url(#g7)" mask="url(#mB)"/>
<rect x="401" y="560" width="4" height="72" fill="url(#g9)"/>
<rect x="478" y="560" width="4" height="72" fill="url(#g10)"/>
<rect x="401" y="556" width="81" height="4" fill="url(#g8)"/>
<rect x="401" y="632" width="81" height="4" fill="url(#g8)"/>
<rect x="413" y="597" width="9" height="8" fill="#0900fe" opacity="0.25"/>
<rect x="415" y="599" width="3" height="4" fill="#1d00ff" opacity="0.6"/>
<rect x="417" y="601" width="2" height="2" fill="#000015"/>
<rect x="549" y="556" width="81" height="80" fill="url(#g1)"/>
<rect x="549" y="560" width="81" height="34" fill="url(#g2)" mask="url(#mT)"/>
<rect x="549" y="598" width="81" height="34" fill="url(#g2)" mask="url(#mB)"/>
<rect x="549" y="560" width="4" height="72" fill="url(#g4)"/>
<rect x="626" y="560" width="4" height="72" fill="url(#g5)"/>
<rect x="549" y="556" width="81" height="4" fill="url(#g3)"/>
<rect x="549" y="632" width="81" height="4" fill="url(#g3)"/>
<rect x="561" y="597" width="9" height="8" fill="#00004d" opacity="0.25"/>
<rect x="563" y="599" width="3" height="4" fill="#00005b" opacity="0.6"/>
<rect x="565" y="601" width="2" height="2" fill="#000008"/>
<g shape-rendering="crispEdges">
<rect x="722.5" y="34.5" width="140" height="340" fill="#f5f5f5" stroke="#000" stroke-width="1"/>
<rect x="723" y="59" width="139" height="1" fill="#000"/>
<rect x="723" y="85" width="139" height="1" fill="#000"/>
<rect x="723" y="281" width="139" height="1" fill="#000"/>
</g>
<rect x="737" y="96" width="21" height="170" fill="url(#cbar)"/></svg>
<div class="t" style="left:737px;top:38px;letter-spacing:0.3px">JsMagTotal</div><div class="t" style="left:736px;top:64px;letter-spacing:0.33px">Type: Linear</div><div class="t" style="left:737px;top:285px;">Max: 60.4</div><div class="t" style="left:737px;top:302px;letter-spacing:0.05px">Min: 0.322</div><div class="t" style="left:737px;top:319px;letter-spacing:0.3px">Units: A/m</div><div class="t" style="left:737px;top:336px;letter-spacing:0.1px">Mean: 14.8</div><div class="t" style="left:737px;top:353px;letter-spacing:0.2px">STD: 13.1</div>
<div class="t n" style="top:89.0px">60</div><div class="t n" style="top:106.0px">54</div><div class="t n" style="top:123.1px">48</div><div class="t n" style="top:140.2px">42</div><div class="t n" style="top:157.2px">36</div><div class="t n" style="top:174.2px">30</div><div class="t n" style="top:191.3px">24</div><div class="t n" style="top:208.4px">18</div><div class="t n" style="top:225.4px">12</div><div class="t n" style="top:242.5px">6</div><div class="t n" style="top:259.5px">0</div>
</body></html>
